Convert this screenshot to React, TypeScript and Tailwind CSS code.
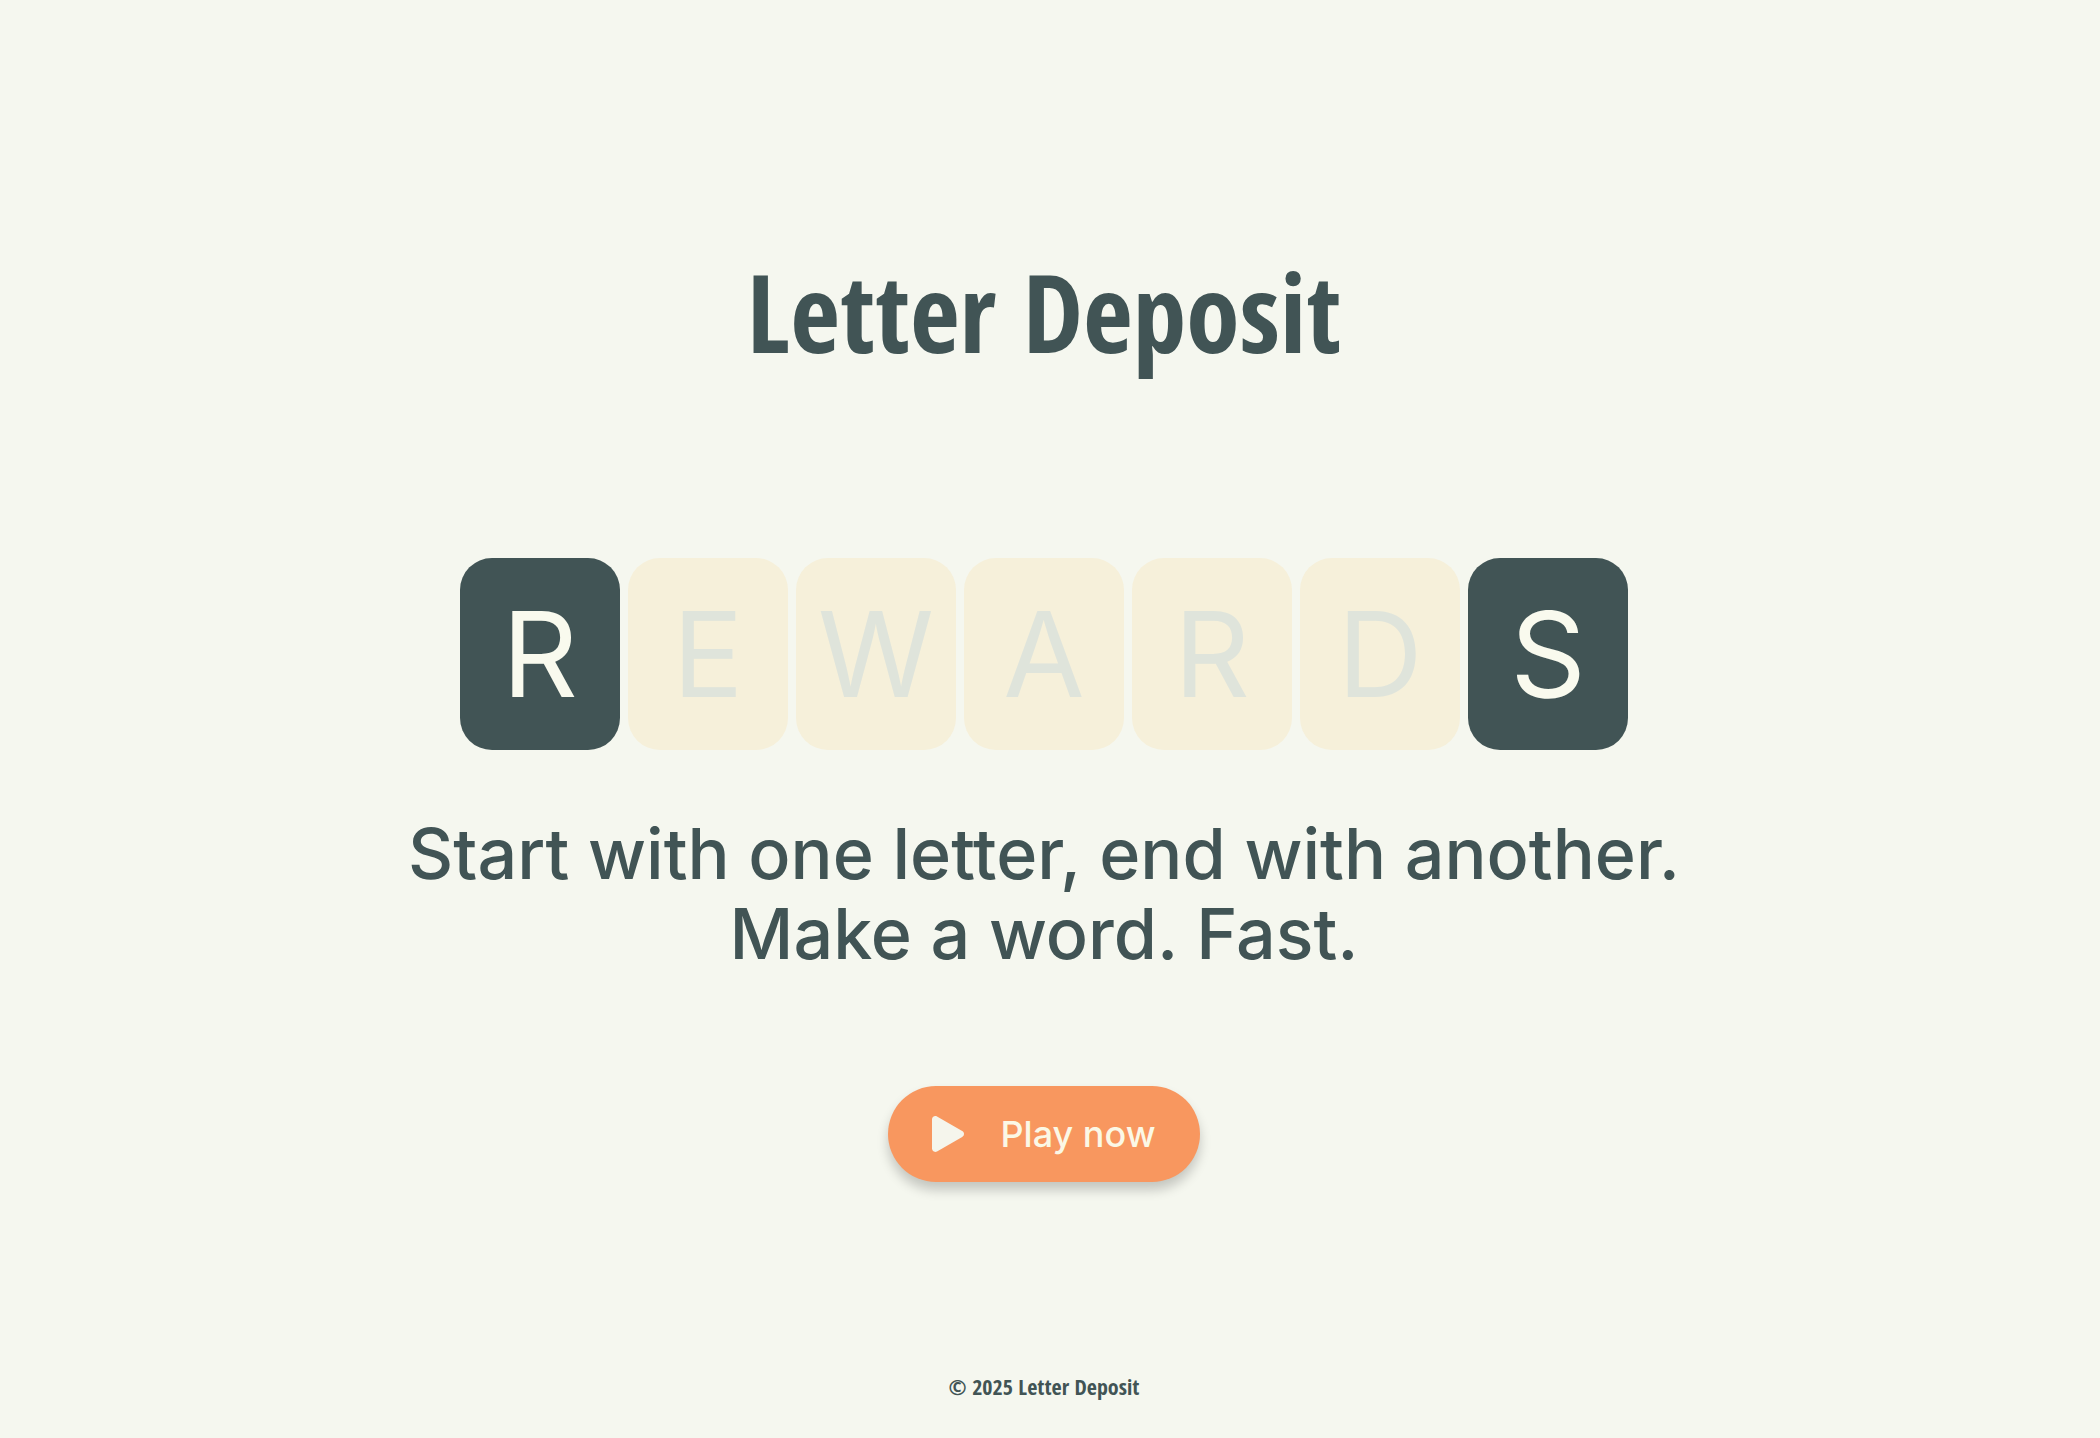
const tiles = [
  { letter: "R", filled: true },
  { letter: "E", filled: false },
  { letter: "W", filled: false },
  { letter: "A", filled: false },
  { letter: "R", filled: false },
  { letter: "D", filled: false },
  { letter: "S", filled: true },
];

function LetterTile({ letter, filled }: { letter: string; filled: boolean }) {
  return (
    <div
      className={`flex h-48 w-40 items-center justify-center rounded-4xl text-[118px] leading-none ${
        filled ? "bg-[#415455] text-[#f9faee]" : "bg-[#f6f0da] text-[#dfe4db]"
      }`}
    >
      {letter}
    </div>
  );
}

function PlayIcon() {
  return (
    <svg viewBox="0 0 32 36" className="h-9 w-8 text-[#f5f5ec]" fill="currentColor" aria-hidden="true">
      <path d="M0 3.4C0 .8 2.7-.8 5 .5l25.2 14.6c2.4 1.3 2.4 4.5 0 5.8L5 35.5c-2.3 1.3-5-.3-5-2.9Z" />
    </svg>
  );
}

export default function App() {
  return (
    <div className="flex min-h-screen flex-col items-center bg-[#f5f7ef] pr-3 font-['Inter',sans-serif] text-[#415455]">
      <main className="flex grow flex-col items-center pt-56">
        <h1 className="font-['Open_Sans_Condensed','Roboto_Condensed',sans-serif] text-[108px] leading-[176px] font-bold">
          Letter Deposit
        </h1>
        <div className="mt-[158px] flex gap-2">
          {tiles.map((tile, i) => (
            <LetterTile key={i} letter={tile.letter} filled={tile.filled} />
          ))}
        </div>
        <p className="mt-16 text-center text-[70px] leading-20 font-medium">
          Start with one letter, end with another.
          <br />
          Make a word. Fast.
        </p>
        <button
          type="button"
          className="mt-28 flex h-24 items-center gap-9 rounded-full bg-[#f8975f] px-11 text-[36px] font-medium text-[#fbf8e6] shadow-[0_8px_12px_rgba(0,0,0,0.2)]"
        >
          <PlayIcon />
          Play now
        </button>
      </main>
      <footer className="pb-8 font-['Open_Sans_Condensed','Roboto_Condensed',sans-serif] text-[22px] leading-10 font-bold">
        © 2025 Letter Deposit
      </footer>
    </div>
  );
}
